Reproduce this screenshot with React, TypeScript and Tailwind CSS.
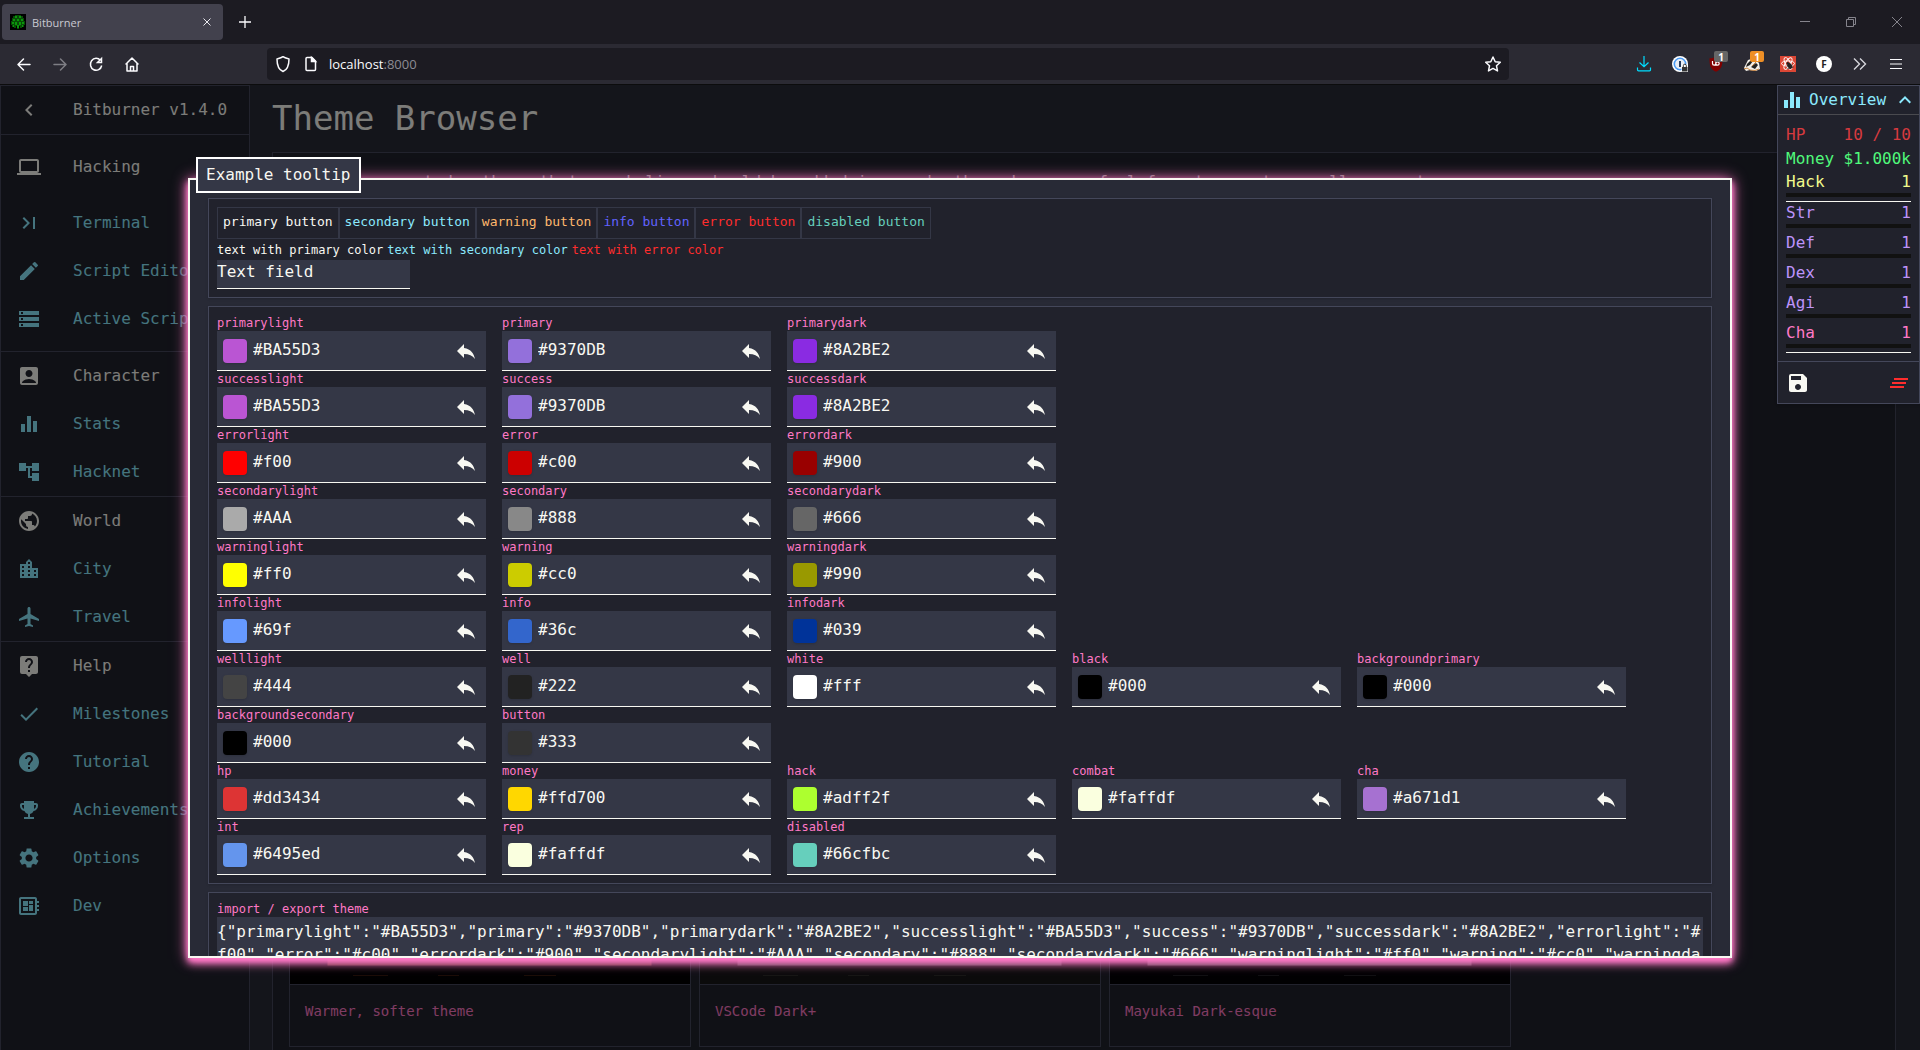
import React from "react";
import type { IconType } from "react-icons";
import {
  MdAccountBox,
  MdAccountTree,
  MdAirplanemodeActive,
  MdCheck,
  MdChevronLeft,
  MdClearAll,
  MdComputer,
  MdCreate,
  MdDeveloperBoard,
  MdEmojiEvents,
  MdEqualizer,
  MdHelp,
  MdKeyboardArrowUp,
  MdLastPage,
  MdLiveHelp,
  MdLocationCity,
  MdPublic,
  MdReply,
  MdSave,
  MdSettings,
  MdStorage,
} from "react-icons/md";

type ThemeColor = { name: string; value: string };

const colorRows: ThemeColor[][] = [
  [
    { name: "primarylight", value: "#BA55D3" },
    { name: "primary", value: "#9370DB" },
    { name: "primarydark", value: "#8A2BE2" },
  ],
  [
    { name: "successlight", value: "#BA55D3" },
    { name: "success", value: "#9370DB" },
    { name: "successdark", value: "#8A2BE2" },
  ],
  [
    { name: "errorlight", value: "#f00" },
    { name: "error", value: "#c00" },
    { name: "errordark", value: "#900" },
  ],
  [
    { name: "secondarylight", value: "#AAA" },
    { name: "secondary", value: "#888" },
    { name: "secondarydark", value: "#666" },
  ],
  [
    { name: "warninglight", value: "#ff0" },
    { name: "warning", value: "#cc0" },
    { name: "warningdark", value: "#990" },
  ],
  [
    { name: "infolight", value: "#69f" },
    { name: "info", value: "#36c" },
    { name: "infodark", value: "#039" },
  ],
  [
    { name: "welllight", value: "#444" },
    { name: "well", value: "#222" },
    { name: "white", value: "#fff" },
    { name: "black", value: "#000" },
    { name: "backgroundprimary", value: "#000" },
  ],
  [
    { name: "backgroundsecondary", value: "#000" },
    { name: "button", value: "#333" },
  ],
  [
    { name: "hp", value: "#dd3434" },
    { name: "money", value: "#ffd700" },
    { name: "hack", value: "#adff2f" },
    { name: "combat", value: "#faffdf" },
    { name: "cha", value: "#a671d1" },
  ],
  [
    { name: "int", value: "#6495ed" },
    { name: "rep", value: "#faffdf" },
    { name: "disabled", value: "#66cfbc" },
  ],
];

const themeJson = JSON.stringify(
  Object.fromEntries(colorRows.flat().map((c) => [c.name, c.value])),
);

const navIcon = "size-6 fill-none stroke-[#fbfbfe] stroke-[1.5]";

function TabStrip() {
  return (
    <div className="flex h-11 items-center bg-[#1c1b22] pl-0.5">
      <div className="flex h-9 w-[221px] items-center rounded bg-[#42414d] pr-2 pl-2">
        <svg className="size-4" viewBox="0 0 16 16">
          <rect width="16" height="16" fill="#000" />
          <path d="M5 1h6v1h2v2h1v3h1v4h-1v2h-2v1h-2v-2H9v3H7v-3H6v2H4v-1H2v-2H1V7h1V4h1V2h2z" fill="#064d06" />
          <path d="M5 2h2v2H5zM9 2h2v2H9zM3 5h2v2H3zM11 5h2v2h-2zM7 5h2v2H7zM2 8h2v2H2zM12 8h2v2h-2zM5 8h2v3H5zM9 8h2v3H9zM7 11h2v3H7zM3 11h1v2H3zM12 11h1v2h-1z" fill="#0b960b" />
        </svg>
        <span className="ml-1.5 flex-1 text-[11px] leading-none text-[#c9c9d1]">Bitburner</span>
        <button aria-label="Close tab" className="flex size-4 items-center justify-center">
          <svg className="size-2" viewBox="0 0 8 8" fill="none" stroke="#e8e8ee">
            <path d="M.5.5l7 7M7.5.5l-7 7" />
          </svg>
        </button>
      </div>
      <button aria-label="New tab" className="ml-4 flex size-3 items-center justify-center">
        <svg className="size-3" viewBox="0 0 12 12" fill="none" stroke="#fbfbfe">
          <path d="M6 0v12M0 6h12" strokeWidth="1.3" />
        </svg>
      </button>
      <div className="ml-auto flex pr-[18px] text-[#85848c]">
        <button aria-label="Minimize" className="mr-9 size-[10px]">
          <svg viewBox="0 0 10 10" stroke="currentColor"><path d="M0 4.5h10" /></svg>
        </button>
        <button aria-label="Restore" className="mr-9 size-[10px]">
          <svg viewBox="0 0 10 10" fill="none" stroke="currentColor"><path d="M.5 2.5h7v7h-7zM2.5 2.5v-2h7v7h-2" /></svg>
        </button>
        <button aria-label="Close" className="size-[10px]">
          <svg viewBox="0 0 10 10" stroke="currentColor"><path d="M0 0l10 10M10 0L0 10" /></svg>
        </button>
      </div>
    </div>
  );
}

function Badge({ className, children }: { className: string; children: React.ReactNode }) {
  return (
    <span
      className={`absolute -top-[5px] left-1.5 flex h-[11px] w-3.5 items-center justify-center rounded-xs text-[10px] leading-none font-bold text-white ${className}`}
    >
      {children}
    </span>
  );
}

function NavBar() {
  return (
    <div className="flex h-10 items-center bg-[#2b2a33] pl-3">
      <div className="flex w-[255px] gap-3">
        <button aria-label="Back">
          <svg className={navIcon} viewBox="0 0 24 24"><path d="M18 12.500H6.500M11.500 7l-5.500 5.500 5.500 5.500" strokeLinecap="round" strokeLinejoin="round" /></svg>
        </button>
        <button aria-label="Forward" className="opacity-40">
          <svg className={navIcon} viewBox="0 0 24 24"><path d="M6 12.500h11.500M12.500 7l5.500 5.500-5.500 5.500" strokeLinecap="round" strokeLinejoin="round" /></svg>
        </button>
        <button aria-label="Reload">
          <svg className={navIcon} viewBox="0 0 24 24"><path d="M16.500 8.500A5.700 6 0 1 0 17.700 13.500M17.500 6.500v4H13.500z" /></svg>
        </button>
        <button aria-label="Home">
          <svg className={navIcon} viewBox="0 0 24 24"><path d="M6 12l6-6 6 6M7 11v8h10v-8M10.500 19v-4.500h3V19" strokeLinejoin="round" strokeLinecap="round" /></svg>
        </button>
      </div>
      <div className="flex h-8 flex-1 items-center rounded bg-[#1c1b22] pr-1 pl-1">
        <svg className={navIcon} viewBox="0 0 24 24"><path d="M12 4.700c2 1.600 4 1.800 6 2.200C18 13 16.800 17.500 12 19.500 7.200 17.500 6 13 6 6.900 8 6.500 10 6.300 12 4.700z" strokeLinejoin="round" /></svg>
        <svg className="ml-1 size-6 fill-none stroke-[#fbfbfe] stroke-[1.5]" viewBox="0 0 24 24">
          <path d="M8 5.500h5l3.500 3.500v8.500a1 1 0 0 1-1 1H8a1 1 0 0 1-1-1v-11a1 1 0 0 1 1-1z" />
          <path d="M12.500 5.500v4h4z" fill="#fbfbfe" />
        </svg>
        <span className="ml-1.5 flex-1 pt-0.5 text-[13px] text-[#fbfbfe]">
          localhost<span className="text-[#8d8c94]">:8000</span>
        </span>
        <button aria-label="Bookmark this page">
          <svg className={navIcon} viewBox="0 0 24 24"><path d="M12 5l2.200 4.700 5.100.6-3.800 3.500 1 5.100L12 16.400l-4.500 2.500 1-5.100-3.800-3.500 5.100-.6z" strokeLinejoin="round" /></svg>
        </button>
      </div>
      <div className="ml-[127px] flex gap-5 pr-4">
        <button aria-label="Downloads">
          <svg className="size-4 fill-none stroke-[#00ddff] stroke-[1.2]" viewBox="0 0 16 16"><path d="M8 0v10.500M3.500 6.500L8 10.700l4.500-4.200M1.500 11.500v2.300a1 1 0 0 0 1 1h11a1 1 0 0 0 1-1v-2.300" /></svg>
        </button>
        <button aria-label="Password manager">
          <svg className="size-4" viewBox="0 0 16 16">
            <circle cx="8" cy="8" r="8" fill="#fff" />
            <circle cx="8" cy="8" r="5.700" fill="#e9eef5" stroke="#4a9bf5" strokeWidth="1.600" />
            <rect x="7" y="5" width="2" height="6" fill="#243b5e" />
            <rect x="9.500" y="8.500" width="6.500" height="7.500" fill="#fff" />
            <rect x="10" y="11" width="5.500" height="4.500" fill="#333" />
            <path d="M11.300 11V9.700a1.500 1.500 0 0 1 3 0V11" fill="none" stroke="#333" />
          </svg>
        </button>
        <button aria-label="Content blocker" className="relative">
          <svg className="size-4" viewBox="0 0 16 16">
            <path d="M8 .5c2 1.400 4.500 1.700 6.500 1.800 0 6.700-.5 10.700-6.500 13.500C2 13 1.500 9 1.500 2.300 3.500 2.200 6 1.900 8 .5z" fill="#800000" />
            <path d="M4.500 5v2.500a1.600 1.600 0 0 0 3.300 0V5M7.800 7.500a1.700 1.700 0 1 0 3.400 0 1.700 1.700 0 0 0-3.400 0" fill="none" stroke="#fff" strokeWidth="1.200" />
          </svg>
          <Badge className="bg-[#666]">1</Badge>
        </button>
        <button aria-label="Tracker blocker" className="relative">
          <svg className="size-4" viewBox="0 0 16 16">
            <path d="M0 12l4-8 6-2 5 5 1 6-4 2-6-1-4 1z" fill="#f3efe9" />
            <path d="M3 8l4-4 2 1-3 4-4 2zM7 11l5-4 2 2-3 4z" fill="#222" />
            <path d="M0 13l3-1 3 2 5 .5 4-1.500M8 10l4-4" fill="none" stroke="#c98746" />
          </svg>
          <Badge className="bg-[#ee8f26]">1</Badge>
        </button>
        <button aria-label="React developer tools">
          <svg className="size-4" viewBox="0 0 16 16">
            <rect width="16" height="16" fill="#dc4735" />
            <g fill="none" stroke="#fff" strokeWidth=".9">
              <ellipse cx="8" cy="7.500" rx="6.500" ry="2.600" />
              <ellipse cx="8" cy="7.500" rx="6.500" ry="2.600" transform="rotate(60 8 7.500)" />
              <ellipse cx="8" cy="7.500" rx="6.500" ry="2.600" transform="rotate(120 8 7.500)" />
            </g>
            <ellipse cx="9.800" cy="10" rx="2.200" ry="3" fill="#222" transform="rotate(-30 9.800 10)" />
            <circle cx="7.800" cy="7.300" r="1.200" fill="#222" />
            <path d="M6.500 10l6-1M7.500 12.500l6-1.500" stroke="#222" strokeWidth=".8" />
          </svg>
        </button>
        <button
          aria-label="Account"
          className="flex size-4 items-center justify-center rounded-full bg-white text-[10px] font-bold text-[#222]"
        >
          F
        </button>
        <button aria-label="More tools">
          <svg className="size-4 fill-none stroke-[#d6d6dc] stroke-[1.4]" viewBox="0 0 16 16"><path d="M2 2.500L7.500 8 2 13.500M8 2.500L13.500 8 8 13.500" /></svg>
        </button>
        <button aria-label="Menu">
          <svg className="size-4 stroke-[#fbfbfe] stroke-1" viewBox="0 0 16 16"><path d="M2 3.500h12M2 8h12M2 12.500h12" /></svg>
        </button>
      </div>
    </div>
  );
}

type NavEntry = { label: string; icon: IconType };

const navGroups: { head: NavEntry; items: NavEntry[] }[] = [
  {
    head: { label: "Hacking", icon: MdComputer },
    items: [
      { label: "Terminal", icon: MdLastPage },
      { label: "Script Editor", icon: MdCreate },
      { label: "Active Scripts", icon: MdStorage },
    ],
  },
  {
    head: { label: "Character", icon: MdAccountBox },
    items: [
      { label: "Stats", icon: MdEqualizer },
      { label: "Hacknet", icon: MdAccountTree },
    ],
  },
  {
    head: { label: "World", icon: MdPublic },
    items: [
      { label: "City", icon: MdLocationCity },
      { label: "Travel", icon: MdAirplanemodeActive },
    ],
  },
  {
    head: { label: "Help", icon: MdLiveHelp },
    items: [
      { label: "Milestones", icon: MdCheck },
      { label: "Tutorial", icon: MdHelp },
      { label: "Achievements", icon: MdEmojiEvents },
      { label: "Options", icon: MdSettings },
      { label: "Dev", icon: MdDeveloperBoard },
    ],
  },
];

function SidebarItem({ label, icon: Icon, className }: NavEntry & { className: string }) {
  return (
    <button className={`flex h-12 w-full items-center gap-8 pl-4 ${className}`}>
      <Icon className="size-6 shrink-0" />
      <span className="whitespace-nowrap">{label}</span>
    </button>
  );
}

function Sidebar() {
  return (
    <nav className="w-[250px] shrink-0 border border-b-0 border-[#44475a] bg-[#21222c]">
      <SidebarItem label="Bitburner v1.4.0" icon={MdChevronLeft} className="text-[#f8f8f2]" />
      {navGroups.map((group, i) => (
        <div key={group.head.label} className={i === 0 ? "border-t border-[#44475a] pb-2" : "border-t border-[#44475a]"}>
          <SidebarItem {...group.head} className={i === 0 ? "my-2 text-[#f8f8f2]" : "text-[#f8f8f2]"} />
          {group.items.map((item) => (
            <SidebarItem key={item.label} {...item} className="text-[#8be9fd]" />
          ))}
        </div>
      ))}
    </nav>
  );
}

const themeCards = [
  { title: "Warmer, softer theme", back: "#000000", edge: "#a05a48", ink: "#5a2b16" },
  { title: "VSCode Dark+", back: "#161616", edge: "#8a848a", ink: "#3c3c34" },
  { title: "Mayukai Dark-esque", back: "#020304", edge: "#8a848a", ink: "#34343c" },
];

function ThemeBrowser() {
  return (
    <main className="flex min-w-0 flex-1 flex-col pt-3 pr-6 pl-[22px]">
      <h1 className="text-[34px] leading-[42px] text-[#f8f8f2]">Theme Browser</h1>
      <section className="mt-[13px] flex flex-1 flex-col justify-between border border-b-0 border-[#44475a] bg-[#21222c] px-4 pt-[17px] pb-[3px]">
        <p className="text-[#f8f8f2]">
          If you've created a theme that you believe should be added in game's theme browser, feel free to create a pull request.
        </p>
        <div className="flex gap-2">
          {themeCards.map((card) => (
            <article key={card.title} className="w-[402px] border border-[#44475a]">
              <svg className="block w-full" viewBox="0 0 400 218">
                <rect width="400" height="218" fill={card.back} />
                <rect x="38" y="36" width="323" height="163" fill="none" stroke={card.edge} strokeWidth="1" />
                <rect x="38" y="190" width="323" height="9" fill={card.edge} />
                <g fill={card.ink} opacity=".6">
                  <rect x="63" y="209" width="35" height="1" />
                  <rect x="148" y="209" width="21" height="1" />
                  <rect x="234" y="209" width="32" height="1" />
                </g>
              </svg>
              <h2 className="border-t border-[#44475a] px-[15px] pt-3.5 pb-[23px] text-sm leading-6 text-[#ff79c6]">{card.title}</h2>
            </article>
          ))}
        </div>
      </section>
    </main>
  );
}

function ColorField({ name, value }: ThemeColor) {
  const id = `color-${name}`;
  return (
    <div className="w-[269px]">
      <label htmlFor={id} className="block h-4 text-xs leading-4 text-[#ff79c6]">{name}</label>
      <div className="flex h-10 items-center border-b border-[#f8f8f2] bg-[#343746] pr-2 pl-1.5">
        <button
          aria-label={`Pick ${name}`}
          className="size-6 shrink-0 rounded shadow"
          style={{ backgroundColor: value }}
        />
        <input id={id} defaultValue={value} className="mx-1.5 min-w-0 flex-1 pb-0.5 text-base leading-6 outline-none" />
        <button aria-label={`Reset ${name}`}>
          <MdReply className="size-6" />
        </button>
      </div>
    </div>
  );
}

const panel = "border border-[#44475a] bg-[#21222c] p-2 shadow";

const sampleButtons = [
  { label: "primary button", color: "text-[#f8f8f2]" },
  { label: "secondary button", color: "text-[#8be9fd]" },
  { label: "warning button", color: "text-[#ffb86c]" },
  { label: "info button", color: "text-[#6262ff]" },
  { label: "error button", color: "text-[#ff2d2d]" },
  { label: "disabled button", color: "text-[#66cfbc]" },
];

function ThemeEditor() {
  return (
    <div
      role="dialog"
      aria-label="Theme editor"
      className="min-w-0 flex-1 overflow-hidden border-2 border-[#f8f8f2] bg-[#282a36] p-[18px] text-[#f8f8f2] shadow-[0_3px_5px_-1px_#ff79c6,0_5px_8px_0_#ff79c6,0_1px_14px_0_#ff79c6]"
    >
      <section className={panel}>
        <div className="flex">
          {sampleButtons.map((b) => (
            <button
              key={b.label}
              disabled={b.label === "disabled button"}
              className={`h-8 border border-[#343746] px-[5px] pb-0.5 text-[13px] ${b.color}`}
            >
              {b.label}
            </button>
          ))}
        </div>
        <div className="flex h-[21px] items-center gap-1 text-xs">
          <span>text with primary color</span>
          <span className="text-[#8be9fd]">text with secondary color</span>
          <span className="text-[#ff2d2d]">text with error color</span>
        </div>
        <input
          aria-label="Text field"
          defaultValue="Text field"
          className="block h-[29px] w-[193px] border-b border-[#f8f8f2] bg-[#343746] pb-[5px] outline-none"
        />
      </section>

      <section className={`mt-2 ${panel}`}>
        {colorRows.map((row) => (
          <div key={row[0].name} className="flex gap-4">
            {row.map((c) => (
              <ColorField key={c.name} {...c} />
            ))}
          </div>
        ))}
      </section>

      <section className={`mt-2 ${panel}`}>
        <label htmlFor="theme-json" className="block h-4 text-xs leading-4 text-[#ff79c6]">import / export theme</label>
        <textarea
          id="theme-json"
          rows={9}
          defaultValue={themeJson}
          className="block w-full resize-none overflow-hidden bg-[#343746] pt-[3px] leading-[23px] break-all outline-none"
        />
      </section>
    </div>
  );
}

type Stat = { label: string; value: string; color: string; bar: boolean; last?: boolean };

const stats: Stat[] = [
  { label: "HP", value: "10 / 10", color: "text-[#d73a3f]", bar: false },
  { label: "Money", value: "$1.000k", color: "text-[#50fa7b]", bar: false },
  { label: "Hack", value: "1", color: "text-[#f1fa8c]", bar: true, last: true },
  { label: "Str", value: "1", color: "text-[#bd93f9]", bar: true },
  { label: "Def", value: "1", color: "text-[#bd93f9]", bar: true },
  { label: "Dex", value: "1", color: "text-[#bd93f9]", bar: true },
  { label: "Agi", value: "1", color: "text-[#bd93f9]", bar: true },
  { label: "Cha", value: "1", color: "text-[#ff79c6]", bar: true, last: true },
];

function Overview() {
  return (
    <aside className="absolute top-0 right-0 w-[143px] border border-[#44475a] bg-[#21222c] shadow">
      <button className="flex h-[29px] w-full items-center border-b border-[#4a4a4f] pr-0.5 pl-0.5 text-[#8be9fd]">
        <MdEqualizer className="size-6" />
        <span className="flex-1 pl-[5px] text-left">Overview</span>
        <MdKeyboardArrowUp className="size-6" />
      </button>
      <div className="px-2 pt-2 pb-2">
        <table className="w-full border-collapse">
          <tbody>
            {stats.map((s) => (
              <React.Fragment key={s.label}>
                <tr className={`${s.bar ? "h-[22px]" : "h-6"} ${s.color}`}>
                  <th scope="row" className="p-0 text-left leading-[22px] font-normal">{s.label}</th>
                  <td className="p-0 text-right leading-[22px] whitespace-nowrap">{s.value}</td>
                </tr>
                {s.bar && (
                  <tr>
                    <td colSpan={2} className="p-0">
                      <div className={s.last ? "border-b border-[#f8f8f2] pb-1" : "pb-1"}>
                        <div className="h-1 bg-[#111]" />
                      </div>
                    </td>
                  </tr>
                )}
              </React.Fragment>
            ))}
          </tbody>
        </table>
      </div>
      <div className="flex h-[42px] items-center justify-between border-t border-[#44475a] px-2">
        <button aria-label="Save game" className="text-[#f8f8f2]">
          <MdSave className="size-6" />
        </button>
        <button aria-label="Kill all scripts" className="text-[#ff2d2d]">
          <MdClearAll className="size-6" />
        </button>
      </div>
    </aside>
  );
}

export default function App() {
  return (
    <div className="flex h-screen flex-col overflow-hidden bg-[#1c1b22]">
      <header className="shrink-0 border-b border-[#0c0c0d] font-['Open_Sans',sans-serif]">
        <TabStrip />
        <NavBar />
      </header>
      <div className="relative flex min-h-0 flex-1 overflow-hidden bg-[#282a36] font-['DejaVu_Sans_Mono',monospace] text-base">
        <Sidebar />
        <ThemeBrowser />
        <div className="absolute inset-0 flex bg-black/50 px-47 pt-[93px] pb-23">
          <ThemeEditor />
        </div>
        <div
          role="tooltip"
          className="absolute top-18 left-49 border-2 border-white bg-[#343746] px-2 py-1 text-[#f8f8f2]"
        >
          Example tooltip
        </div>
        <Overview />
      </div>
    </div>
  );
}
